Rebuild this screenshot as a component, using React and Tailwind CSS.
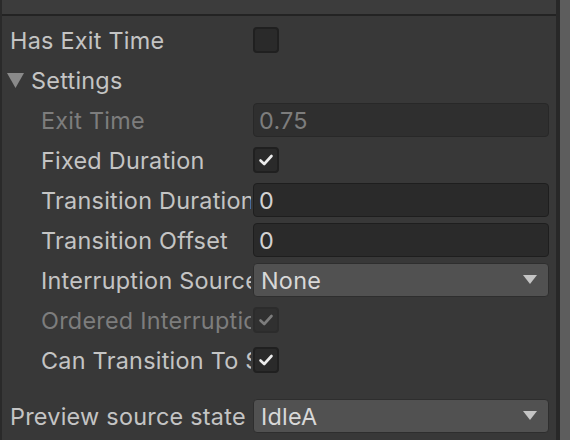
import React from 'react'

const font = { fontFamily: 'Inter, "Noto Sans", sans-serif' }

function Check({ checked, disabled }) {
  return (
    <div
      className={`w-[26px] h-[26px] rounded-[4px] border-2 flex items-center justify-center ${
        disabled ? 'bg-[#303030] border-[#2c2c2c]' : 'bg-[#2a2a2a] border-[#202020]'
      }`}
    >
      {checked && (
        <svg width="18" height="18" viewBox="0 0 18 18">
          <path
            d="M3.5 9.5 L7.2 13 L14.5 5"
            fill="none"
            stroke={disabled ? '#7c7c7c' : '#ececec'}
            strokeWidth="2.6"
            strokeLinecap="round"
            strokeLinejoin="round"
          />
        </svg>
      )}
    </div>
  )
}

function Field({ value, disabled }) {
  return (
    <div
      className={`flex-1 h-[34px] rounded-[4px] border flex items-center pl-[5px] pt-[2px] ${
        disabled ? 'bg-[#2f2f2f] border-[#282828] text-[#7d7d7d]' : 'bg-[#2a2a2a] border-[#1e1e1e] text-[#d2d2d2]'
      }`}
    >
      {value}
    </div>
  )
}

function Dropdown({ value }) {
  return (
    <div className="flex-1 h-[34px] rounded-[4px] border border-[#2e2e2e] bg-[#515151] flex items-center justify-between pl-[7px] pr-[11px] text-[#d8d8d8]">
      <span className="pt-[2px]">{value}</span>
      <svg width="14" height="10" viewBox="0 0 14 10">
        <path d="M0 0 H14 L7 9 Z" fill="#c4c4c4" />
      </svg>
    </div>
  )
}

function Row({ label, indent, disabled, children, className = '' }) {
  return (
    <div className={`h-[40px] flex items-center ${className}`}>
      <div className={`w-[249px] overflow-hidden whitespace-nowrap pt-[2px] ${indent ? 'pl-[39px]' : 'pl-[8px]'} ${disabled ? 'text-[#7d7d7d]' : 'text-[#c4c4c4]'}`}>
        {label}
      </div>
      <div className="flex-1 flex items-center pl-[2px] pr-[7px]">{children}</div>
    </div>
  )
}

export default function App() {
  return (
    <div className="w-[570px] h-[440px] bg-[#383838] flex overflow-hidden text-[23.4px] leading-none tracking-[0.25px]" style={font}>
      <div className="flex-1 flex flex-col border-l-2 border-[#2a2a2a] border-r-4 border-r-[#282828]">
        <div className="h-[14px] bg-[#3c3c3c] border-b-2 border-[#232323] box-content" />
        <div className="pt-[4px] flex flex-col">
          <Row label="Has Exit Time">
            <Check />
          </Row>
          <div className="h-[40px] flex items-center pl-[5px] text-[#c4c4c4]">
            <svg width="17" height="15" viewBox="0 0 17 15" className="mr-[7px]">
              <path d="M0 0 H17 L8.5 15 Z" fill="#8a8a8a" />
            </svg>
            <span className="pt-[2px]">Settings</span>
          </div>
          <Row label="Exit Time" indent disabled>
            <Field value="0.75" disabled />
          </Row>
          <Row label="Fixed Duration" indent>
            <Check checked />
          </Row>
          <Row label="Transition Duration" indent>
            <Field value="0" />
          </Row>
          <Row label="Transition Offset" indent>
            <Field value="0" />
          </Row>
          <Row label="Interruption Source" indent>
            <Dropdown value="None" />
          </Row>
          <Row label="Ordered Interruption" indent disabled>
            <Check checked disabled />
          </Row>
          <Row label="Can Transition To Self" indent>
            <Check checked />
          </Row>
          <Row label="Preview source state" className="mt-[16px]">
            <Dropdown value="IdleA" />
          </Row>
        </div>
      </div>
      <div className="w-[10px] bg-[#5d5d5d]" />
    </div>
  )
}
